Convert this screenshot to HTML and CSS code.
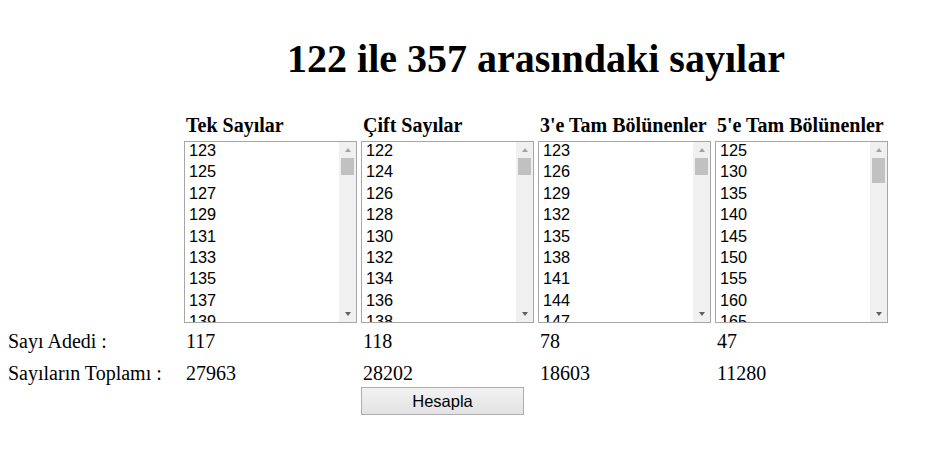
FILE: index.html
```html
<!DOCTYPE html>
<html lang="tr">
<head>
<meta charset="utf-8">
<title>122 ile 357 arasındaki sayılar</title>
<link rel="stylesheet" href="styles.css">
</head>
<body>
<div class="layout">
  <h1 class="title">122 ile 357 arasındaki sayılar</h1>

  <div class="head first">Tek Sayılar</div>
  <div class="head">Çift Sayılar</div>
  <div class="head">3'e Tam Bölünenler</div>
  <div class="head">5'e Tam Bölünenler</div>

  <div class="listbox first">
    <ul class="items"><li>123</li><li>125</li><li>127</li><li>129</li><li>131</li><li>133</li><li>135</li><li>137</li><li>139</li></ul>
    <div class="sb"><div class="sb-btn"><span class="arrow-up"></span></div><div class="track"><div class="thumb"></div></div><div class="sb-btn"><span class="arrow-down"></span></div></div>
  </div>
  <div class="listbox">
    <ul class="items"><li>122</li><li>124</li><li>126</li><li>128</li><li>130</li><li>132</li><li>134</li><li>136</li><li>138</li></ul>
    <div class="sb"><div class="sb-btn"><span class="arrow-up"></span></div><div class="track"><div class="thumb"></div></div><div class="sb-btn"><span class="arrow-down"></span></div></div>
  </div>
  <div class="listbox">
    <ul class="items"><li>123</li><li>126</li><li>129</li><li>132</li><li>135</li><li>138</li><li>141</li><li>144</li><li>147</li></ul>
    <div class="sb"><div class="sb-btn"><span class="arrow-up"></span></div><div class="track"><div class="thumb"></div></div><div class="sb-btn"><span class="arrow-down"></span></div></div>
  </div>
  <div class="listbox">
    <ul class="items"><li>125</li><li>130</li><li>135</li><li>140</li><li>145</li><li>150</li><li>155</li><li>160</li><li>165</li></ul>
    <div class="sb"><div class="sb-btn"><span class="arrow-up"></span></div><div class="track"><div class="thumb tall"></div></div><div class="sb-btn"><span class="arrow-down"></span></div></div>
  </div>

  <div class="cell label">Sayı Adedi :</div>
  <div class="cell">117</div>
  <div class="cell">118</div>
  <div class="cell">78</div>
  <div class="cell">47</div>

  <div class="cell label">Sayıların Toplamı :</div>
  <div class="cell">27963</div>
  <div class="cell">28202</div>
  <div class="cell">18603</div>
  <div class="cell">11280</div>

  <div class="btn-cell"><button class="btn" type="button">Hesapla</button></div>
</div>
</body>
</html>
```

FILE: styles.css
```css
body {
  margin: 8px;
  background: #ffffff;
  color: #000000;
  font-family: "Liberation Serif", "Times New Roman", serif;
  font-size: 20px;
}

.layout {
  display: grid;
  grid-template-columns: 172px repeat(4, 173px);
  column-gap: 4px;
}

.title {
  grid-column: 2 / 6;
  margin: 28px 0 0;
  font-size: 40px;
  line-height: 46px;
  font-weight: bold;
  text-align: center;
  white-space: nowrap;
}

.head {
  margin: 31px 0 4px;
  padding-left: 2px;
  line-height: 24px;
  font-weight: bold;
  white-space: nowrap;
}

.first {
  grid-column-start: 2;
}

.listbox {
  box-sizing: border-box;
  height: 182px;
  border: 1px solid #a6a6a6;
  background: #ffffff;
  display: flex;
}

.items {
  flex: 1;
  overflow: hidden;
  list-style: none;
  margin: 0;
  padding: 0;
  font-family: "Liberation Sans", Arial, sans-serif;
  font-size: 16.3px;
  color: #000000;
}

.items li {
  height: 21.4px;
  line-height: 17px;
  padding-left: 4px;
}

.sb {
  width: 17px;
  background: #f0f0f0;
  display: flex;
  flex-direction: column;
}

.sb-btn {
  height: 16px;
  display: flex;
  align-items: center;
  justify-content: center;
}

.arrow-up,
.arrow-down {
  width: 0;
  height: 0;
  border-left: 3.5px solid transparent;
  border-right: 3.5px solid transparent;
}

.arrow-up {
  border-bottom: 4px solid #a3a3a3;
}

.arrow-down {
  border-top: 4px solid #606060;
}

.track {
  flex: 1;
  padding: 0 2px;
}

.thumb {
  height: 17px;
  background: #c1c1c1;
}

.thumb.tall {
  height: 25px;
}

.cell {
  padding: 6px 0 2px 2px;
  line-height: 24px;
  white-space: nowrap;
}

.cell.label {
  padding-left: 0;
}

.btn-cell {
  grid-column: 3;
}

.btn {
  display: block;
  box-sizing: border-box;
  margin-top: 0;
  width: 163px;
  height: 28px;
  padding: 0;
  border: 1px solid #adadad;
  border-radius: 0;
  background: linear-gradient(#f2f2f2, #e2e2e2);
  font-family: "Liberation Sans", Arial, sans-serif;
  font-size: 16.5px;
  color: #000000;
}
```
